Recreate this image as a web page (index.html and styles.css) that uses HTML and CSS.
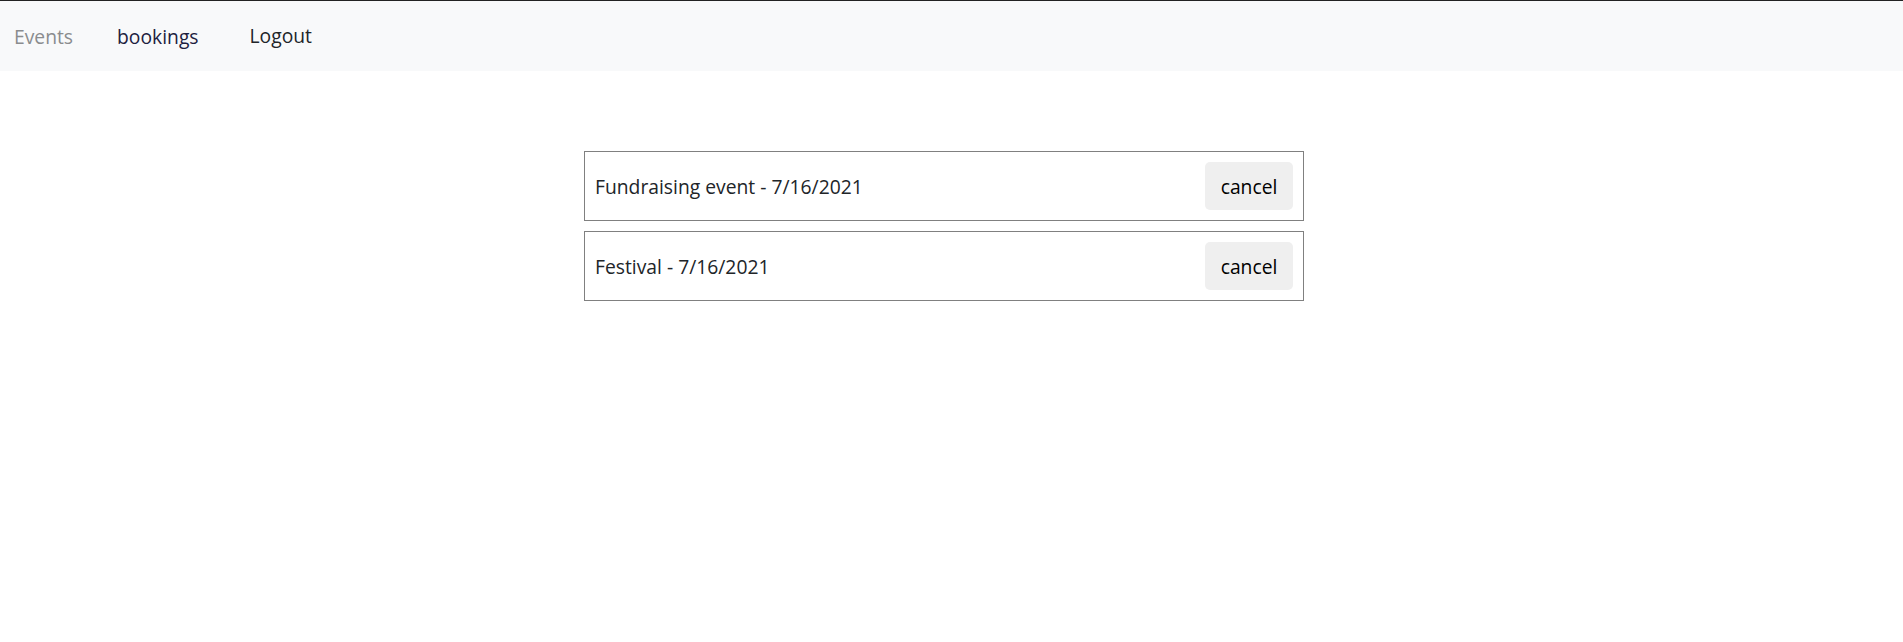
FILE: index.html
```html
<!DOCTYPE html>
<html lang="en">
<head>
<meta charset="utf-8">
<title>Bookings</title>
<link rel="stylesheet" href="styles.css">
</head>
<body>
<nav class="navbar">
  <a class="nav-link nav-muted" href="#">Events</a>
  <a class="nav-link nav-dark" href="#">bookings</a>
  <button class="nav-logout" type="button">Logout</button>
</nav>
<main class="page">
  <ul class="booking-list">
    <li class="booking">
      <span class="booking-title">Fundraising event - 7/16/2021</span>
      <button class="cancel-btn" type="button">cancel</button>
    </li>
    <li class="booking">
      <span class="booking-title">Festival - 7/16/2021</span>
      <button class="cancel-btn" type="button">cancel</button>
    </li>
  </ul>
</main>
</body>
</html>
```

FILE: styles.css
```css
* { box-sizing: border-box; }
html, body { margin: 0; padding: 0; background: #fff; }
body {
  font-family: "Open Sans", "Noto Sans", sans-serif;
  font-size: 19.3px;
  color: #212529;
  border-top: 1px solid #222;
}
.navbar {
  display: flex;
  align-items: center;
  height: 70px;
  background: #f8f9fa;
  padding-left: 14px;
}
.nav-link {
  text-decoration: none;
  font-size: 19.3px;
}
.nav-muted { color: #8a8c8e; }
.nav-dark { color: #1d2140; margin-left: 44px; }
.nav-logout {
  font-family: inherit;
  font-size: 19.3px;
  color: #212529;
  background: transparent;
  border: 0;
  padding: 0;
  margin-left: 51px;
  margin-top: -2px;
}
.page {
  display: flex;
  justify-content: center;
  padding: 80px 15px 0 0;
}
.booking-list {
  list-style: none;
  margin: 0;
  padding: 0;
  width: 720px;
  display: flex;
  flex-direction: column;
  gap: 10px;
}
.booking {
  display: flex;
  align-items: center;
  justify-content: space-between;
  border: 1px solid #808080;
  padding: 10px;
  height: 70px;
}
.booking-title { color: #212529; }
.cancel-btn {
  font-family: inherit;
  font-size: 19.3px;
  color: #000;
  background: #efefef;
  border: 0;
  border-radius: 5px;
  width: 88px;
  height: 48px;
  padding: 0;
}
```
